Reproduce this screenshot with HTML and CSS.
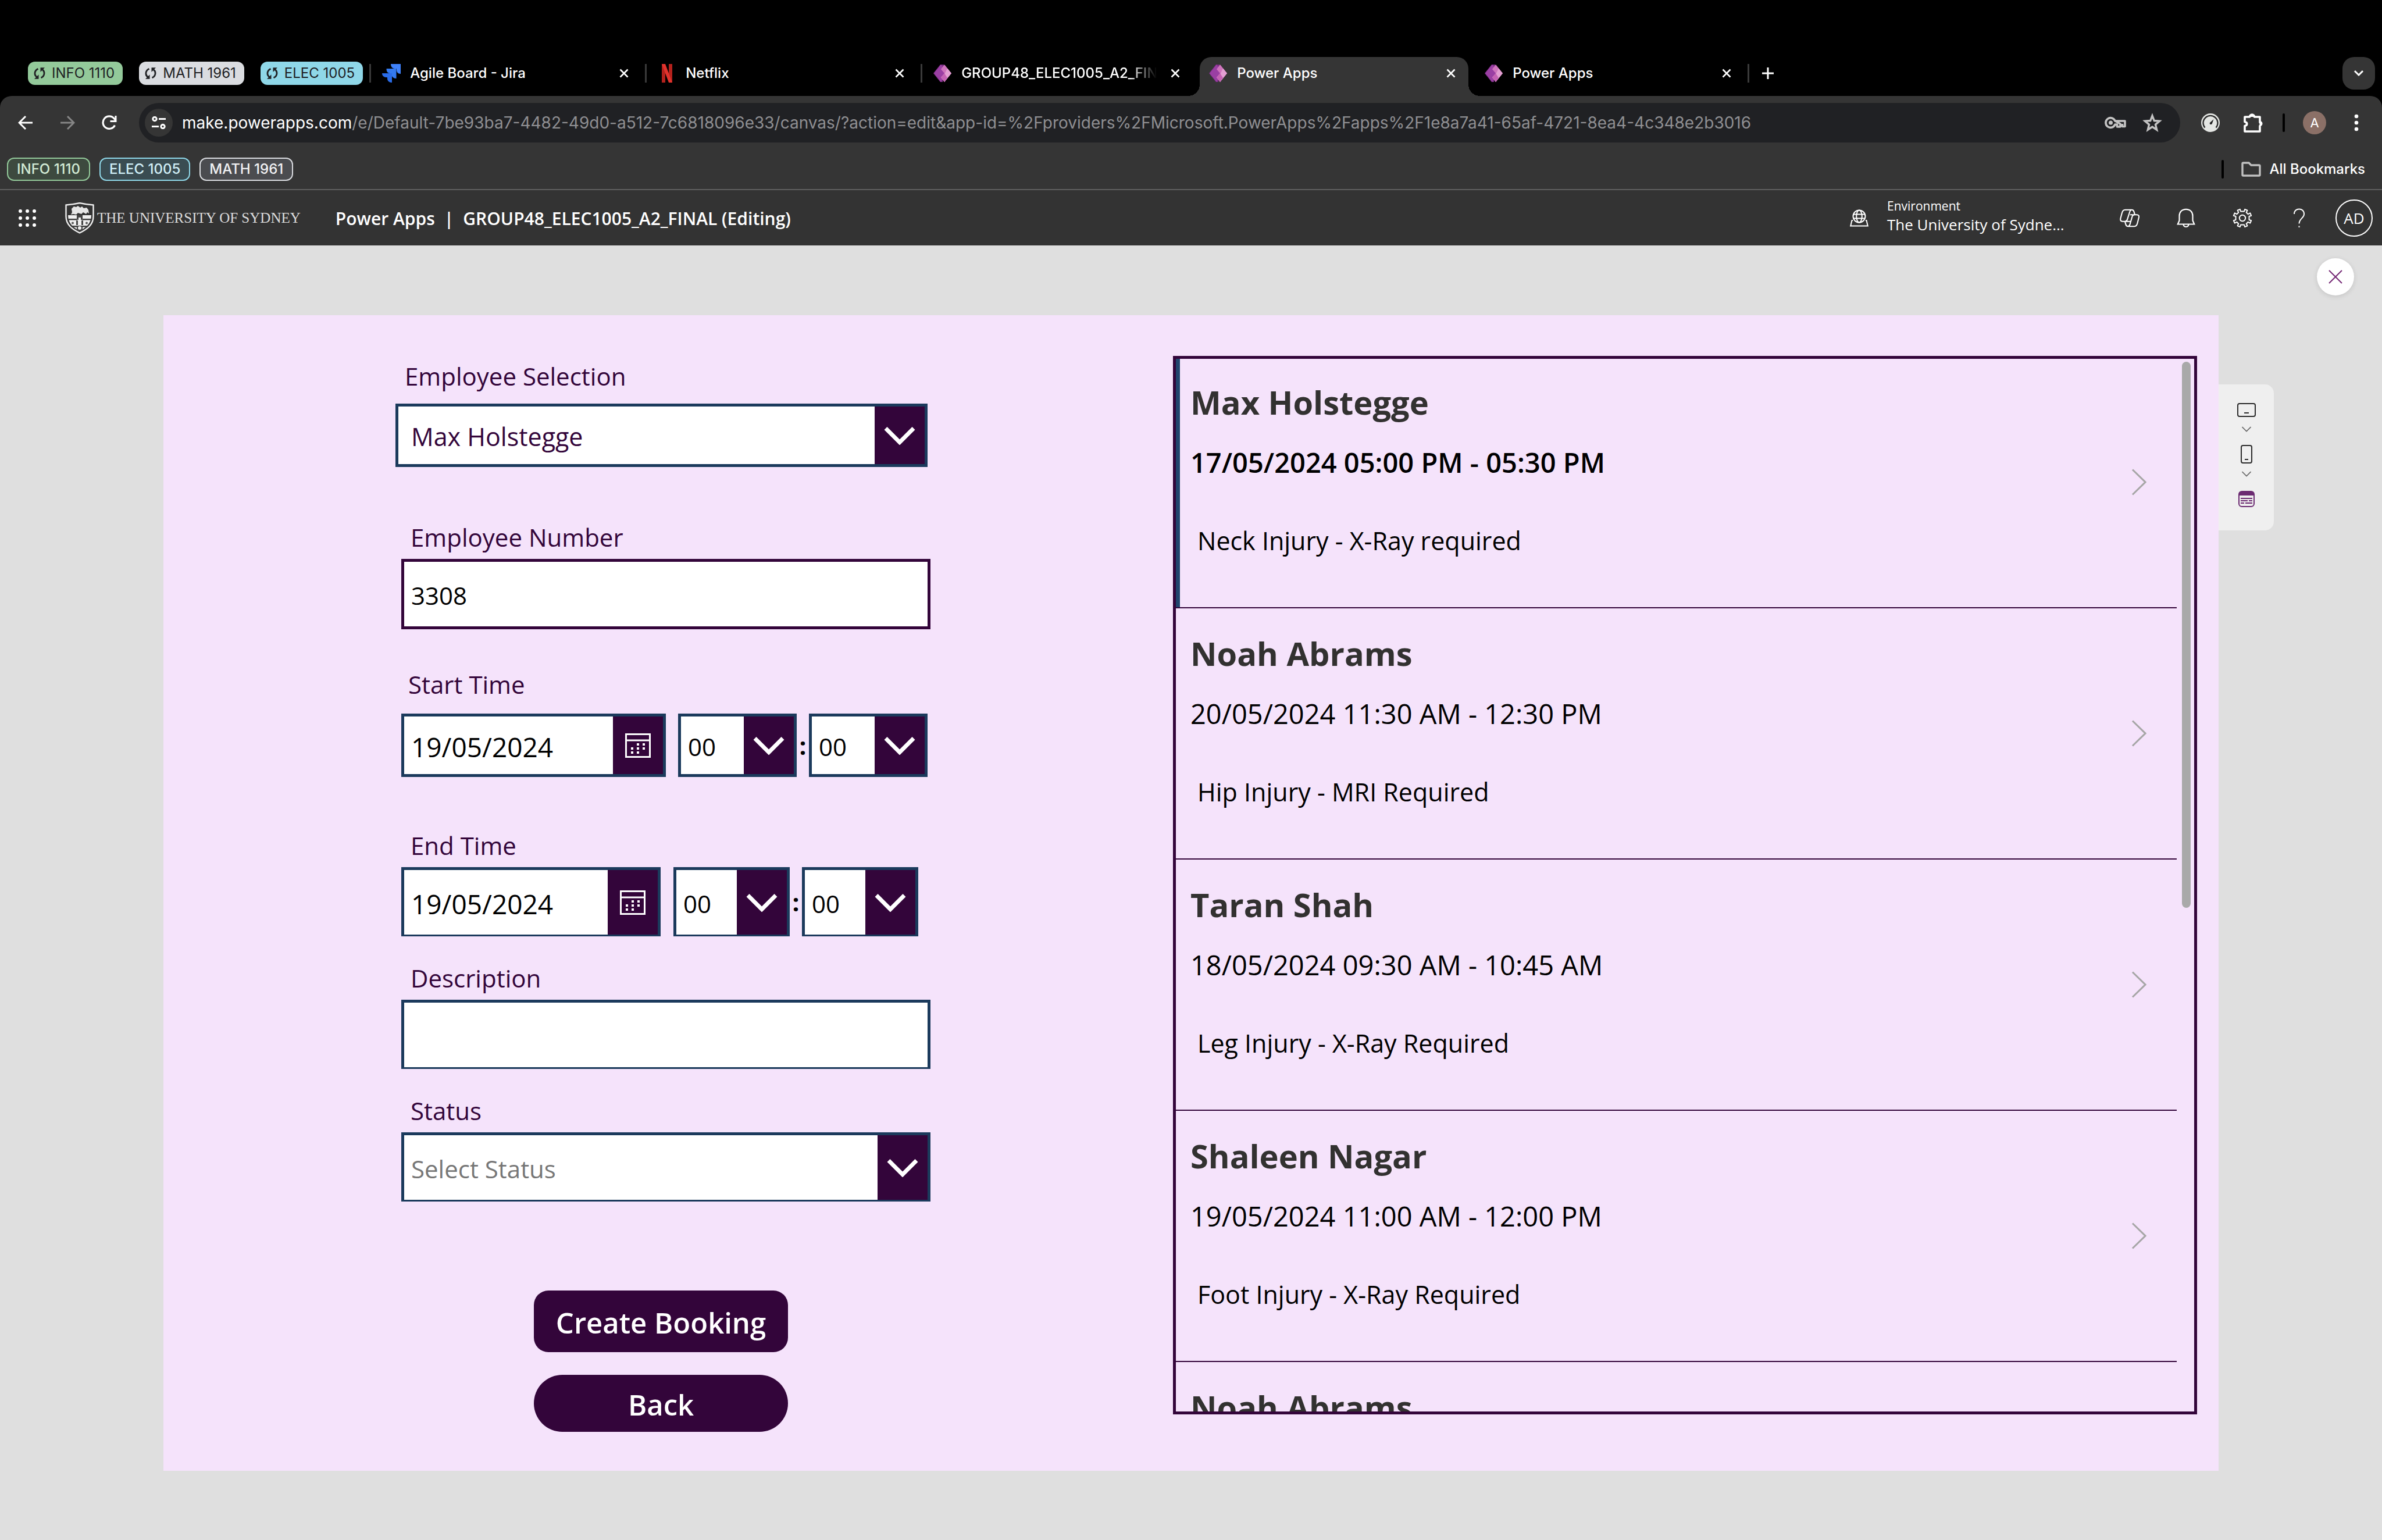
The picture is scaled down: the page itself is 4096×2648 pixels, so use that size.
FILE: index.html
```html
<!DOCTYPE html>
<html lang="en">
<head>
<meta charset="utf-8">
<title>Power Apps</title>
<link rel="stylesheet" href="styles.css">
</head>
<body>
<svg class="sprite" aria-hidden="true">
  <defs>
    <symbol id="i-sync" viewBox="0 0 20 20"><path d="M7.500 2.200C.5 5.500.5 13.500 5.500 16.500M12.500 17.800c7-3.300 7-11.300 2-14.300" fill="none" stroke="currentColor" stroke-width="2.800"/><path d="M1 19.800h7.500v-7.500zM19 .2h-7.500v7.500z" fill="currentColor"/></symbol>
    <symbol id="i-x" viewBox="0 0 16 16"><path d="M1.500 1.500l13 13M14.500 1.500l-13 13" fill="none" stroke="currentColor" stroke-width="2.600"/></symbol>
    <symbol id="i-pa" viewBox="0 0 32 32"><path d="M12 1h6l-2 30h-4L0 16z" fill="#7b2d84"/><path d="M13 1l7 10-2 10-5 10L1 16z" fill="#9a3fa3"/><path d="M19 1l12 15-12 15-6-8 6-7-6-7z" fill="#cf74bd"/><path d="M24 7.500l7 8.500-12 15-6-8 7-7z" fill="#e39fd2"/><path d="M13 23l6-7 5 8-5 7z" fill="#c563b4"/></symbol>
    <symbol id="i-chev" viewBox="0 0 54 32"><path d="M3 3.500l24 24 24-24" fill="none" stroke="currentColor" stroke-width="7"/></symbol>
    <symbol id="i-cal" viewBox="0 0 44 42"><path d="M1.500 1.500h41v39h-41zM1.500 12h41" fill="none" stroke="currentColor" stroke-width="3"/><path d="M20 17h4v4h-4zM30 17h4v4h-4zM10 24h4v4h-4zM20 24h4v4h-4zM30 24h4v4h-4zM10 31h4v4h-4zM20 31h4v4h-4z" fill="currentColor"/></symbol>
    <symbol id="i-next" viewBox="0 0 26 46"><path d="M2 1.500L24 23 2 44.500" fill="none" stroke="#a6a6a6" stroke-width="3"/></symbol>
  </defs>
</svg>

<div class="page">
  <nav class="tabs" aria-label="Tabs">
    <button class="group group--green"><svg class="group__icon"><use href="#i-sync"/></svg>INFO 1110</button>
    <button class="group group--grey"><svg class="group__icon"><use href="#i-sync"/></svg>MATH 1961</button>
    <button class="group group--cyan"><svg class="group__icon"><use href="#i-sync"/></svg>ELEC 1005</button>
    <div class="tablist">
      <div class="tab">
        <svg class="tab__icon" viewBox="0 0 32 32"><path d="M15 0h17v17c-5 0-7-3-7-7V8h-3c-4 0-7-3-7-8z" fill="#3f82fb"/><path d="M7.500 8h17v17c-5 0-8-3-8-7v-2h-3c-4 0-6-3-6-8z" fill="#347af0"/><path d="M0 16h17v16c-5 0-8-3-8-7v-2H7c-4 0-7-3-7-7z" fill="#2a6ce8"/></svg>
        <span class="tab__title">Agile Board - Jira</span>
        <button class="tab__close" aria-label="Close tab"><svg><use href="#i-x"/></svg></button>
      </div>
      <div class="tab">
        <svg class="tab__icon" viewBox="0 0 32 32"><path d="M7 0h6v32H7zM19 0h6v32h-6z" fill="#b3211c"/><path d="M7 0h6l12 32h-6z" fill="#e0332d"/></svg>
        <span class="tab__title">Netflix</span>
        <button class="tab__close" aria-label="Close tab"><svg><use href="#i-x"/></svg></button>
      </div>
      <div class="tab">
        <svg class="tab__icon"><use href="#i-pa"/></svg>
        <span class="tab__title tab__title--fade">GROUP48_ELEC1005_A2_FIN</span>
        <button class="tab__close" aria-label="Close tab"><svg><use href="#i-x"/></svg></button>
      </div>
      <div class="tab tab--active">
        <svg class="tab__icon"><use href="#i-pa"/></svg>
        <span class="tab__title">Power Apps</span>
        <button class="tab__close" aria-label="Close tab"><svg><use href="#i-x"/></svg></button>
      </div>
      <div class="tab tab--after">
        <svg class="tab__icon"><use href="#i-pa"/></svg>
        <span class="tab__title">Power Apps</span>
        <button class="tab__close" aria-label="Close tab"><svg><use href="#i-x"/></svg></button>
      </div>
      <button class="newtab" aria-label="New tab"><svg viewBox="0 0 20 20"><path d="M10 0v20M0 10h20" stroke="currentColor" stroke-width="3"/></svg></button>
    </div>
    <button class="tabsearch" aria-label="Search tabs"><svg viewBox="0 0 18 12"><path d="M2 2l7 7 7-7" fill="none" stroke="currentColor" stroke-width="3"/></svg></button>
  </nav>

  <div class="chrome">
    <div class="toolbar">
      <button class="navbtn" aria-label="Back"><svg viewBox="0 0 26 26"><path d="M25 13H3M13 2L2 13l11 11" fill="none" stroke="#fff" stroke-width="3"/></svg></button>
      <button class="navbtn" aria-label="Forward"><svg viewBox="0 0 26 26"><path d="M1 13h22M13 2l11 11-11 11" fill="none" stroke="#868686" stroke-width="3"/></svg></button>
      <button class="navbtn" aria-label="Reload"><svg viewBox="0 0 26 26"><path d="M22.500 17.500A10.800 10.800 0 1 1 21 5.500l2.500 3" fill="none" stroke="#fff" stroke-width="3.200"/><path d="M25.500 1v11h-11v-3h8V1z" fill="#fff"/></svg></button>
      <div class="omnibox">
        <button class="siteinfo" aria-label="Site information"><svg viewBox="0 0 24 22"><g fill="none" stroke="#fff" stroke-width="3"><circle cx="5" cy="4.500" r="3.200"/><path d="M12 4.500h12M0 17.500h12"/><circle cx="19" cy="17.500" r="3.200"/></g></svg></button>
        <div class="url" role="textbox" aria-label="Address"><span class="url__host">make.powerapps.com</span>/e/Default-7be93ba7-4482-49d0-a512-7c6818096e33/canvas/?action=edit&amp;app-id=%2Fproviders%2FMicrosoft.PowerApps%2Fapps%2F1e8a7a41-65af-4721-8ea4-4c348e2b3016</div>
        <button class="omnibtn" aria-label="Passwords"><svg viewBox="0 0 38 34"><g fill="none" stroke="#c4c4c4" stroke-width="3.600"><path d="M18 14h17v9.500h-4.500V19M27 19v5h-5.500v-4H18a8.300 8.300 0 1 1 0-6z" stroke-linejoin="round"/></g><circle cx="10.500" cy="17" r="3.500" fill="#c4c4c4"/></svg></button>
        <button class="omnibtn" aria-label="Bookmark"><svg viewBox="0 0 34 34"><path d="M17 5l3.300 8.500 9.200.6-7 6 2.200 9L17 24l-7.700 5.100 2.200-9-7-6 9.200-.6z" fill="none" stroke="#c4c4c4" stroke-width="3.400"/></svg></button>
      </div>
      <button class="extbtn" aria-label="Speed extension"><svg viewBox="0 0 34 34"><circle cx="17" cy="17" r="16" fill="#e4e6e3"/><path d="M7.500 25.500a12.500 12.500 0 1 1 19 0" fill="none" stroke="#2b2b2b" stroke-width="2.400"/><path d="M22.500 11l-3 8.500-3 .5-1-2.500z" fill="#1f1f1f"/></svg></button>
      <button class="extbtn" aria-label="Extensions"><svg viewBox="0 0 34 34"><path d="M2 7h8.500a4 4 0 0 1 8 0H28v9.500a4 4 0 0 1 0 6V32H2v-9.500c5-1 5-6 0-7z" fill="none" stroke="#fff" stroke-width="3.600" stroke-linejoin="round"/><path d="M11 7a4 4.500 0 0 1 8 0zM28 14a4.500 4.500 0 0 1 0 9z" fill="#fff"/></svg></button>
      <span class="bar bar--tools"></span>
      <button class="avatar">A</button>
      <button class="menu" aria-label="Menu"><svg viewBox="0 0 8 30"><circle cx="4" cy="4" r="3.300"/><circle cx="4" cy="15" r="3.300"/><circle cx="4" cy="26" r="3.300"/></svg></button>
    </div>
    <div class="bookmarks">
      <button class="mark mark--green">INFO 1110</button>
      <button class="mark mark--cyan">ELEC 1005</button>
      <button class="mark mark--grey">MATH 1961</button>
      <span class="bar bar--marks"></span>
      <button class="allmarks"><svg viewBox="0 0 34 26"><path d="M2 3.500q0-1.500 1.500-1.500H13l4 4h13.500q1.500 0 1.500 1.500v15q0 1.500-1.500 1.500h-27Q2 24 2 22.500z" fill="none" stroke="#c0c0c0" stroke-width="3.400"/></svg>All Bookmarks</button>
    </div>
  </div>

  <header class="header">
    <button class="waffle" aria-label="App launcher"><svg viewBox="0 0 30 30" fill="#fff"><circle cx="3" cy="3" r="3"/><circle cx="15" cy="3" r="3"/><circle cx="27" cy="3" r="3"/><circle cx="3" cy="15" r="3"/><circle cx="15" cy="15" r="3"/><circle cx="27" cy="15" r="3"/><circle cx="3" cy="27" r="3"/><circle cx="15" cy="27" r="3"/><circle cx="27" cy="27" r="3"/></svg></button>
    <a class="logo" href="#">
      <svg viewBox="0 0 50 54">
        <path d="M1.500 4.500Q14 3.500 25 1q11 2.500 23.500 3.500V24c0 14-10 22-23.500 28.500C11.500 46 1.500 38 1.500 24z" fill="#333" stroke="#efefef" stroke-width="2.400"/>
        <path d="M5 22h40c0 13-8 21-20 27C13 43 5 35 5 22z" fill="#efefef"/>
        <path d="M11 11l4-4 4 1 3-2 4 3 3-2 3 3 5-1 3 4 1 6-3-2-2 3-5-3-3 3-6-2-3 3-5-1-4 1 2-4z" fill="#e6e6e6"/>
        <path d="M5.500 28H20v2.500H6zM30 28h14.500l-.5 2.500H30zM9 40h11v2.500h-9zM30 40h11l-2 2.500h-9z" fill="#3c3c3c"/>
        <path d="M20 22h10v8h-3v-4h-4v4h-3zM20 40h10v8l-5 2.500-5-2.500zM19 31h3v8h-3zM28 31h3v8h-3z" fill="#444"/>
        <circle cx="25" cy="44" r="3" fill="#efefef"/><circle cx="13" cy="35.500" r="2" fill="#555"/><circle cx="37" cy="35.500" r="2" fill="#555"/>
      </svg>
      <span class="logo__text">THE UNIVERSITY OF SYDNEY</span>
    </a>
    <h1 class="title"><a href="#">Power Apps</a><span class="title__sep">|</span><span>GROUP48_ELEC1005_A2_FINAL (Editing)</span></h1>
    <button class="env">
      <svg viewBox="0 0 32 30" fill="none" stroke="#fff" stroke-width="2"><circle cx="16" cy="12" r="10.500"/><ellipse cx="16" cy="12" rx="4.800" ry="10.500"/><path d="M6.500 8.500h19M6.500 15.500h19M5 19H3.500L1.200 28.500h29.600L28.500 19H27"/></svg>
      <span class="env__text"><span class="env__label">Environment</span><span class="env__name">The University of Sydne...</span></span>
    </button>
    <button class="hbtn" aria-label="Copilot"><svg viewBox="0 0 36 34" fill="none" stroke="#fff" stroke-width="2.200"><path d="M10 2h12q3 0 4 3.500l1.500 5.500H31q5 0 3.800 5l-2.500 10q-1.500 6-5.500 6H15q-3 0-4-3.500L9.500 23H5q-4.500 0-3.500-5.500L4 8q1.500-6 6-6zM22 2q-3 0-4.500 6L14 19q-1.200 4-4.500 4M27.500 11q-4 0-5 4L19 27q-1 5-5 5M19 11h8.500M9.500 23H19"/></svg></button>
    <button class="hbtn" aria-label="Notifications"><svg viewBox="0 0 34 34" fill="none" stroke="#fff" stroke-width="2.200"><path d="M17 1.800c-7 0-11.500 4.700-11.500 11.500v8L2.800 27.500h28.400l-2.700-6.200v-8C28.500 6.500 24 1.800 17 1.800zM12.500 27.500c0 6 9 6 9 0"/></svg></button>
    <button class="hbtn" aria-label="Settings"><svg viewBox="0 0 34 34" fill="none" stroke="#fff" stroke-width="2"><circle cx="17" cy="17" r="5.200"/><path d="M14 5.500L12.800 1.800 8.500 3.600l1.800 3.600-3 3-3.600-1.800-1.900 4.400L5.500 14v6l-3.700 1.200 1.900 4.400 3.600-1.800 3 3-1.800 3.600 4.300 1.800L14 28.500h6l1.200 3.700 4.300-1.800-1.800-3.600 3-3 3.600 1.800 1.900-4.400L28.500 20v-6l3.700-1.200-1.900-4.400-3.600 1.800-3-3 1.800-3.600-4.300-1.800L20 5.500z" stroke-linejoin="round"/></svg></button>
    <button class="hbtn" aria-label="Help"><svg viewBox="0 0 34 34" fill="none" stroke="#fff" stroke-width="2"><path d="M9 10c0-11.500 17-11.500 17 0 0 7-8.500 8-8.500 16.500M17.500 30.500v2.500"/></svg></button>
    <button class="account">AD</button>
  </header>

  <main class="stage">
    <button class="close" aria-label="Close preview"><svg viewBox="0 0 24 24"><path d="M1 1l22 22M23 1L1 23" stroke="#742774" stroke-width="2"/></svg></button>
    <div class="canvas">
      <form class="form">
        <div class="field field--lead">
          <label class="label" for="employee">Employee Selection</label>
          <div class="combo combo--even combo--plum">
            <select id="employee"><option>Max Holstegge</option></select>
            <span class="combo__arrow"><svg><use href="#i-chev"/></svg></span>
          </div>
        </div>
        <div class="field field--number">
          <label class="label" for="number">Employee Number</label>
          <input class="text text--number" id="number" type="text" value="3308">
        </div>
        <div class="field field--start">
          <label class="label" for="start">Start Time</label>
          <div class="when">
            <div class="date"><input id="start" type="text" value="19/05/2024"><button type="button" aria-label="Pick start date"><svg><use href="#i-cal"/></svg></button></div>
            <div class="combo combo--even"><select aria-label="Start hour"><option>00</option></select><span class="combo__arrow"><svg><use href="#i-chev"/></svg></span></div>
            <span class="colon">:</span>
            <div class="combo combo--even"><select aria-label="Start minute"><option>00</option></select><span class="combo__arrow"><svg><use href="#i-chev"/></svg></span></div>
          </div>
        </div>
        <div class="field">
          <label class="label" for="end">End Time</label>
          <div class="when when--end">
            <div class="date"><input id="end" type="text" value="19/05/2024"><button type="button" aria-label="Pick end date"><svg><use href="#i-cal"/></svg></button></div>
            <div class="combo"><select aria-label="End hour"><option>00</option></select><span class="combo__arrow"><svg><use href="#i-chev"/></svg></span></div>
            <span class="colon">:</span>
            <div class="combo"><select aria-label="End minute"><option>00</option></select><span class="combo__arrow"><svg><use href="#i-chev"/></svg></span></div>
          </div>
        </div>
        <div class="field">
          <label class="label" for="description">Description</label>
          <input class="text" id="description" type="text">
        </div>
        <div class="field">
          <label class="label" for="status">Status</label>
          <div class="combo combo--hint">
            <select id="status"><option>Select Status</option></select>
            <span class="combo__arrow"><svg><use href="#i-chev"/></svg></span>
          </div>
        </div>
        <div class="actions">
          <button class="action" type="button">Create Booking</button>
          <button class="action action--round" type="button">Back</button>
        </div>
      </form>

      <section class="gallery" aria-label="Bookings">
        <ul class="list">
          <li class="item item--selected"><div class="item__body"><h2 class="item__name">Max Holstegge</h2><p class="item__time">17/05/2024 05:00 PM - 05:30 PM</p><p class="item__note">Neck Injury - X-Ray required</p></div><svg class="item__next"><use href="#i-next"/></svg></li>
          <li class="item"><div class="item__body"><h2 class="item__name">Noah Abrams</h2><p class="item__time">20/05/2024 11:30 AM - 12:30 PM</p><p class="item__note">Hip Injury - MRI Required</p></div><svg class="item__next"><use href="#i-next"/></svg></li>
          <li class="item"><div class="item__body"><h2 class="item__name">Taran Shah</h2><p class="item__time">18/05/2024 09:30 AM - 10:45 AM</p><p class="item__note">Leg Injury - X-Ray Required</p></div><svg class="item__next"><use href="#i-next"/></svg></li>
          <li class="item"><div class="item__body"><h2 class="item__name">Shaleen Nagar</h2><p class="item__time">19/05/2024 11:00 AM - 12:00 PM</p><p class="item__note">Foot Injury - X-Ray Required</p></div><svg class="item__next"><use href="#i-next"/></svg></li>
          <li class="item"><div class="item__body"><h2 class="item__name">Noah Abrams</h2></div></li>
        </ul>
        <div class="scroll"><div class="scroll__thumb"></div></div>
      </section>

      <aside class="devices" aria-label="Device preview">
        <button aria-label="Tablet"><svg width="32" height="24" viewBox="0 0 32 24" fill="none" stroke="#2b2b2b" stroke-width="2"><rect x="1" y="1" width="30" height="22" rx="3"/><path d="M12 17h8"/></svg></button>
        <button aria-label="Tablet options"><svg width="16" height="10" viewBox="0 0 16 10" fill="none" stroke="#666" stroke-width="1.600"><path d="M.5 1L8 8.500 15.500 1"/></svg></button>
        <button aria-label="Phone"><svg width="20" height="32" viewBox="0 0 20 32" fill="none" stroke="#2b2b2b" stroke-width="2"><rect x="1" y="1" width="18" height="30" rx="3"/><path d="M7 25h6"/></svg></button>
        <button aria-label="Phone options"><svg width="16" height="10" viewBox="0 0 16 10" fill="none" stroke="#666" stroke-width="1.600"><path d="M.5 1L8 8.500 15.500 1"/></svg></button>
        <button aria-label="Custom form"><svg width="28" height="28" viewBox="0 0 28 28" fill="none" stroke="#6b2a71" stroke-width="2"><rect x="1" y="1" width="26" height="26" rx="5"/><path d="M1 8V5q0-4 4-4h18q4 0 4 4v3z" fill="#6b2a71" stroke="none"/><path d="M4 13h20M4 17h12M18 17h6M4 21h6M12 21h12"/></svg></button>
      </aside>
    </div>
  </main>
</div>
</body>
</html>
```
FILE: styles.css
```css
* { box-sizing: border-box; }

:root {
  --plum: #33053a;
  --navy: #1b3a5c;
  --blush: #f5e3fb;
  --ui: Inter, "Liberation Sans", sans-serif;
  --app: "Open Sans", "Noto Sans", sans-serif;
}

body, h1, h2, p, ul { margin: 0; padding: 0; }
body { background: #000; font-family: var(--app); }
button { border: 0; padding: 0; background: none; color: inherit; font: inherit; cursor: pointer; }
a { color: inherit; text-decoration: none; }
svg { display: block; flex: none; }
.sprite { position: absolute; width: 0; height: 0; }

.page { display: flex; flex-direction: column; min-height: 100vh; }

/* Tab strip */
.tabs {
  display: flex;
  align-items: flex-start;
  gap: 28px;
  padding: 98px 12px 0 48px;
  background: #000;
  color: #fff;
  font: 500 24px/40px var(--ui);
}
.group {
  display: flex;
  align-items: center;
  gap: 11px;
  height: 40px;
  margin-top: 8px;
  padding: 0 14px 0 10px;
  border-radius: 12px;
  color: #202124;
  font-weight: 400;
  white-space: nowrap;
}
.group__icon { width: 20px; height: 20px; }
.group--green { background: #93c99a; }
.group--grey { background: #dadce0; }
.group--cyan { background: #8fd7e8; }
.tablist { display: flex; flex: 1; min-width: 0; margin-left: -17px; }
.tab {
  position: relative;
  display: flex;
  align-items: center;
  flex: 0 1 474px;
  min-width: 0;
  height: 67px;
  padding: 0 20px 11px 22px;
}
.tab::before {
  content: "";
  position: absolute;
  left: 0;
  top: 12px;
  width: 3px;
  height: 32px;
  background: #3a3a3a;
}
.tab__icon { width: 32px; height: 32px; }
.tab__title { flex: 1; min-width: 0; margin: 0 16px; overflow: hidden; white-space: nowrap; }
.tab__title--fade { -webkit-mask-image: linear-gradient(90deg, #000 86%, transparent 100%); mask-image: linear-gradient(90deg, #000 86%, transparent 100%); }
.tab__close { width: 32px; height: 32px; display: grid; place-items: center; }
.tab__close svg { width: 16px; height: 16px; }
.tab--active { margin: 0 6px; flex-basis: 462px; padding: 0 14px 11px 16px; background: #353535; border-radius: 20px 20px 0 0; }
.tab--active::before, .tab--active::after {
  content: "";
  position: absolute;
  left: auto;
  top: auto;
  bottom: 0;
  width: 20px;
  height: 20px;
}
.tab--active::before { right: 100%; background: radial-gradient(circle at 0 0, transparent 20px, #353535 20px); }
.tab--active::after { left: 100%; background: radial-gradient(circle at 100% 0, transparent 20px, #353535 20px); }
.tab--after::before { display: none; }
.newtab { position: relative; width: 70px; height: 56px; display: grid; place-items: center; }
.newtab::before { content: ""; position: absolute; left: 0; top: 12px; width: 3px; height: 32px; background: #3a3a3a; }
.newtab svg { width: 20px; height: 20px; }
.tabsearch { width: 56px; height: 56px; display: grid; place-items: center; background: #353535; border-radius: 20px; }
.tabsearch svg { width: 18px; height: 12px; }

/* Toolbar and bookmarks */
.chrome { background: #353535; border-radius: 20px 20px 0 0; border-bottom: 2px solid #5e5e5e; color: #fff; font-family: var(--ui); }
.toolbar { display: flex; align-items: center; padding: 12px 24px 12px 8px; }
.navbtn { width: 72px; height: 56px; display: grid; place-items: center; }
.navbtn svg { width: 26px; height: 26px; }
.omnibox { display: flex; align-items: center; flex: 1; min-width: 0; height: 68px; margin: 0 15px; padding: 0 17px 0 10px; border-radius: 34px; background: #202124; }
.siteinfo { width: 48px; height: 48px; display: grid; place-items: center; border-radius: 50%; background: #353535; }
.siteinfo svg { width: 24px; height: 22px; }
.url { flex: 1; min-width: 0; margin-left: 16px; overflow: hidden; color: #8f8f92; font-size: 28px; line-height: 40px; white-space: nowrap; }
.url__host { color: #fff; }
.omnibtn { width: 63px; height: 48px; display: grid; place-items: center; }
.omnibtn svg { width: 38px; height: 34px; }
.extbtn { width: 74px; height: 56px; display: grid; place-items: center; }
.extbtn svg { width: 34px; height: 34px; }
.bar { width: 4px; height: 32px; border-radius: 2px; background: #000; }
.bar--tools { margin: 0 31px 0 13px; }
.avatar { width: 40px; height: 40px; border-radius: 50%; background: #8b7067; font-size: 22px; line-height: 40px; }
.menu { width: 40px; height: 40px; margin-left: 32px; display: grid; place-items: center; }
.menu svg { width: 8px; height: 30px; fill: #fff; }
.bookmarks { display: flex; align-items: center; gap: 16px; padding: 14px 29px 14px 12px; font-weight: 500; font-size: 24px; line-height: 36px; }
.mark { height: 40px; padding: 0 15px; border: 2px solid; border-radius: 12px; white-space: nowrap; }
.mark--green { border-color: #93c99a; background: #3d4a3f; color: #d2ead5; }
.mark--cyan { border-color: #8fd7e8; background: #3a4c52; color: #d0eef6; }
.mark--grey { border-color: #dadce0; background: #4b4c50; color: #f1f1f3; }
.bar--marks { margin-left: auto; }
.allmarks { display: flex; align-items: center; gap: 14px; margin-left: 14px; white-space: nowrap; }
.allmarks svg { width: 34px; height: 26px; }

/* App header */
.header { display: flex; align-items: center; height: 95px; padding: 0 16px 0 32px; background: #333; color: #fff; }
.waffle svg { width: 30px; height: 30px; }
.logo { display: flex; align-items: center; gap: 5px; margin-left: 50px; }
.logo svg { width: 50px; height: 54px; }
.logo__text { color: #dcdcdc; font: 25px/32px "Liberation Serif", serif; white-space: nowrap; }
.title { display: flex; flex: 1; min-width: 0; margin-left: 60px; padding-top: 3px; font-size: 30px; line-height: 40px; font-weight: 600; white-space: nowrap; }
.title__sep { margin: 0 16px; }
.env { display: flex; align-items: center; gap: 32px; text-align: left; white-space: nowrap; }
.env svg { width: 32px; height: 30px; }
.env__text { display: flex; flex-direction: column; width: 368px; padding-bottom: 6px; }
.env__label { font-size: 21px; line-height: 28px; }
.env__name { font-size: 26px; line-height: 36px; }
.hbtn { width: 97px; height: 64px; display: grid; place-items: center; }
.hbtn svg { width: 34px; height: 34px; }
.account { width: 64px; height: 64px; margin-left: 15px; border: 2px solid #fff; border-radius: 50%; font-size: 26px; line-height: 60px; }

/* Stage */
.stage { position: relative; flex: 1; padding: 120px 281px; background: #dfdfdf; }
.close { position: absolute; top: 22px; right: 48px; width: 64px; height: 64px; display: grid; place-items: center; border-radius: 50%; background: #fff; box-shadow: 0 2px 8px rgba(0, 0, 0, .12); }
.close svg { width: 24px; height: 24px; }
.canvas { position: relative; display: grid; grid-template-columns: 1736fr 1761fr; padding: 70px 37px 67px 0; background: var(--blush); }

/* Booking form */
.form { width: 1319px; padding: 3px 0 0 409px; color: #000; font-size: 42px; }
.field { display: flex; flex-direction: column; gap: 7px; margin-bottom: 40px; }
.field--lead { gap: 17px; margin: 0 5px 89px -10px; }
.field--number { margin-bottom: 63px; }
.field--start { gap: 20px; margin-bottom: 86px; }
.label { padding: 2px 0 0 16px; color: var(--plum); line-height: 60px; }
.field--start .label { padding-left: 12px; }
.text, .combo select, .date input {
  width: 100%;
  min-width: 0;
  border: 5px solid var(--navy);
  border-bottom-width: 3px;
  border-radius: 0;
  padding: 4px 0 0 12px;
  background: #fff;
  color: #000;
  font: inherit;
  outline: 0;
}
.text { height: 119px; }
.text--number { height: 121px; border: 5px solid var(--plum); }
.combo { display: grid; height: 119px; }
.combo select { grid-area: 1 / 1; height: 100%; appearance: none; }
.combo__arrow { grid-area: 1 / 1; justify-self: end; width: 86px; margin: 5px 5px 3px 0; display: grid; place-items: center; background: var(--plum); color: #fff; pointer-events: none; }
.combo__arrow svg { width: 54px; height: 32px; }
.combo--even { height: 109px; }
.combo--even select { border-bottom-width: 5px; }
.combo--even .combo__arrow { margin-bottom: 5px; }
.combo--plum select { padding-left: 22px; color: var(--plum); font-size: 43px; }
.combo--hint select { color: #777; }
.when { display: grid; grid-template-columns: 455px 21px 204px 21px 204px; }
.when--end { grid-template-columns: 446px 22px 200px 21px 200px; }
.date { grid-column: 1 / 3; display: grid; grid-template-columns: 1fr 86px 5px; margin-right: 21px; height: 109px; }
.date input { grid-area: 1 / 1 / 2 / 4; height: 100%; border-bottom-width: 5px; font-size: 46px; }
.date button { grid-area: 1 / 2; margin: 5px 0; display: grid; place-items: center; z-index: 1; background: var(--plum); color: #fff; }
.date svg { width: 44px; height: 42px; }
.when--end .date { height: 119px; margin-right: 22px; }
.when--end .date input { border-bottom-width: 3px; }
.when--end .date button { margin-bottom: 3px; }
.colon { align-self: center; text-align: center; font-weight: 700; line-height: 60px; }
.actions { display: flex; flex-direction: column; gap: 39px; margin: 153px 245px 0 228px; }
.action { height: 106px; border-radius: 25px; background: var(--plum); color: #fff; font-size: 49px; font-weight: 600; line-height: 64px; padding-top: 4px; }
.action--round { height: 98px; border-radius: 49px; }

/* Bookings gallery */
.gallery { contain: size; display: flex; margin-bottom: 30px; border: 5px solid var(--plum); overflow: hidden; }
.list { flex: 1; min-width: 0; margin-top: -3px; list-style: none; }
.item { display: flex; align-items: center; height: 432px; padding: 0 52px 0 25px; border-bottom: 2px solid var(--plum); color: #000; }
.item--selected { background: linear-gradient(#20456d, #20456d) left / 7px 100% no-repeat; }
.item__body { flex: 1; align-self: flex-start; padding-top: 38px; }
.item__name { color: #323130; font-size: 56px; line-height: 78px; font-weight: 700; }
.item__time { margin-top: 33px; font-size: 47px; line-height: 64px; }
.item--selected .item__time { font-weight: 600; }
.item__note { margin-top: 73px; padding-left: 12px; font-size: 43px; line-height: 60px; }
.item__next { width: 26px; height: 46px; }
.scroll { width: 15px; margin: 5px 6px 0 9px; }
.scroll__thumb { height: 52%; border-radius: 8px; background: #a9a9a9; }

/* Device switcher */
.devices { position: absolute; left: 100%; top: 119px; display: flex; flex-direction: column; align-items: center; width: 95px; height: 251px; padding-top: 32px; border-radius: 0 15px 15px 0; background: #efefef; }
.devices button:nth-child(2) { margin: 16px 0 22px; }
.devices button:nth-child(4) { margin: 13px 0 24px; }
```
